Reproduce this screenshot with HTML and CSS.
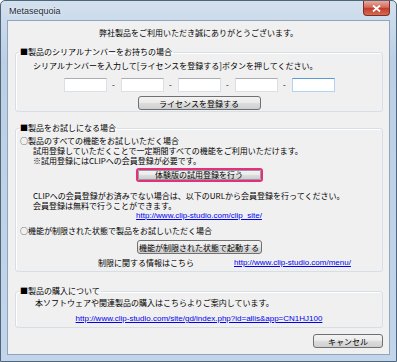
FILE: index.html
```html
<!DOCTYPE html>
<html lang="ja">
<head>
    <meta charset="UTF-8">
    <title>Metasequoia</title>
    <link rel="stylesheet" href="styles.css">
</head>
<body>
    <div class="window">
        <div class="titlebar">
            <span class="title">Metasequoia</span>
            <span class="close">
                <svg width="9" height="7" viewBox="0 0 9 7">
                    <path d="M1 0.5 L8 6.5 M8 0.5 L1 6.5" stroke="#fff" stroke-width="1.8"/>
                </svg>
            </span>
        </div>

        <div class="client">
            <p class="welcome">弊社製品をご利用いただき誠にありがとうございます。</p>

            <fieldset class="group group-serial">
                <legend>■製品のシリアルナンバーをお持ちの場合</legend>
                <p class="sub serial-note">シリアルナンバーを入力して[ライセンスを登録する]ボタンを押してください。</p>
                <div class="serial-row">
                    <input class="serial" type="text">
                    <span class="dash">-</span>
                    <input class="serial" type="text">
                    <span class="dash">-</span>
                    <input class="serial" type="text">
                    <span class="dash">-</span>
                    <input class="serial" type="text">
                    <span class="dash">-</span>
                    <input class="serial serial-focus" type="text">
                </div>
                <div class="row-center license-row">
                    <button class="btn btn-license">ライセンスを登録する</button>
                </div>
            </fieldset>

            <fieldset class="group group-trial">
                <legend>■製品をお試しになる場合</legend>
                <p class="option option-full">○製品のすべての機能をお試しいただく場合</p>
                <p class="sub lines">試用登録していただくことで一定期間すべての機能をご利用いただけます。<br>※試用登録にはCLIPへの会員登録が必要です。</p>
                <div class="row-center trial-row">
                    <span class="highlight">
                        <button class="btn btn-trial">体験版の試用登録を行う</button>
                    </span>
                </div>
                <p class="sub lines clip-note">CLIPへの会員登録がお済みでない場合は、以下のURLから会員登録を行ってください。<br>会員登録は無料で行うことができます。</p>
                <p class="row-center link-row"><a href="#">http://www.clip-studio.com/clip_site/</a></p>
                <p class="option option-limited">○機能が制限された状態で製品をお試しいただく場合</p>
                <div class="row-center limited-row">
                    <button class="btn btn-limited">機能が制限された状態で起動する</button>
                </div>
                <p class="info-row"><span class="info-label">制限に関する情報はこちら</span><a href="#">http://www.clip-studio.com/menu/</a></p>
            </fieldset>

            <fieldset class="group group-buy">
                <legend>■製品の購入について</legend>
                <p class="sub buy-note">本ソフトウェアや関連製品の購入はこちらよりご案内しています。</p>
                <p class="row-center buy-link"><a href="#">http://www.clip-studio.com/site/gd/index.php?id=allis&amp;app=CN1HJ100</a></p>
            </fieldset>

            <div class="footer">
                <button class="btn btn-cancel">キャンセル</button>
            </div>
        </div>
    </div>
</body>
</html>
```

FILE: styles.css
```css
body {
    margin: 0;
    font-family: "Noto Sans CJK JP", sans-serif;
    font-size: 8px;
    color: #000;
    background: #fff;
}

p {
    margin: 0;
}

.window {
    width: 397px;
    height: 362px;
    box-sizing: border-box;
    border: 1px solid #50647b;
    border-radius: 5px 5px 0 0;
    background: linear-gradient(#d3e0ee, #bccfe5 60px, #c3d5ea);
    padding: 0 6px 6px;
    display: flex;
    flex-direction: column;
}

.titlebar {
    height: 19px;
    display: flex;
    justify-content: space-between;
}

.title {
    font-family: "Liberation Sans", sans-serif;
    font-size: 9px;
    color: #1e2a38;
    margin: 5px 0 0 2px;
    text-shadow: 0 0 3px #fff;
}

.close {
    width: 27px;
    height: 15px;
    box-sizing: border-box;
    border: 1px solid #7a2f27;
    border-top: none;
    border-radius: 0 0 4px 4px;
    background: linear-gradient(#e9a89b, #d46a5c 45%, #c23c2c 52%, #d86a52);
    display: flex;
    align-items: center;
    justify-content: center;
}

.client {
    flex: 1;
    background: #f0f0f0;
    border: 1px solid #8fa5bd;
    display: flex;
    flex-direction: column;
}

.welcome {
    margin-top: 7px;
    text-align: center;
    line-height: 10px;
}

.group {
    margin: 9px 6px 0 7px;
    padding: 0;
    border: 1px solid #d5dfe5;
    border-radius: 3px;
    box-shadow: inset 1px 1px 0 #fff;
    min-width: 0;
}

.group legend {
    margin-left: 3px;
    padding: 0 1px;
    line-height: 10px;
}

.sub {
    padding-left: 17px;
}

.option {
    padding-left: 4px;
    line-height: 10px;
}

.lines {
    line-height: 10px;
}

.row-center {
    display: flex;
    justify-content: center;
}

/* serial section */
.serial-note {
    margin-top: 4px;
    line-height: 10px;
}

.serial-row {
    display: flex;
    justify-content: center;
    align-items: center;
    margin-top: 7px;
}

.serial {
    width: 43px;
    height: 14px;
    box-sizing: border-box;
    margin: 0;
    padding: 0;
    border: 1px solid #dbdfe6;
    border-top-color: #abadb3;
    background: #fff;
}

.serial-focus {
    border-color: #b5d3ef;
    border-top-color: #5b9bd5;
}

.dash {
    width: 14px;
    text-align: center;
    line-height: 14px;
}

.license-row {
    margin: 4px 0 1px;
}

/* buttons */
.btn {
    font: inherit;
    color: #000;
    height: 14px;
    box-sizing: border-box;
    padding: 0;
    border: 1px solid #707070;
    border-radius: 3px;
    background: linear-gradient(#f3f3f3, #ebebeb 45%, #dddddd 52%, #cfcfcf);
    line-height: 11px;
}

.btn-license {
    width: 123px;
}

/* trial section */
.group-trial {
    margin-top: 11px;
}

.option-full {
    margin-top: 3px;
}

.trial-row {
    margin-top: 2px;
}

.highlight {
    display: flex;
    border: 2px solid #e2307f;
    border-radius: 3px;
}

.btn-trial {
    width: 123px;
    height: 10px;
    line-height: 8px;
    border-color: #9a9a9a;
    border-radius: 1px;
}

.clip-note {
    margin-top: 9px;
}

.link-row {
    line-height: 10px;
}

a {
    color: #0000ee;
    font-family: "Liberation Sans", sans-serif;
}

.option-limited {
    margin-top: 5px;
}

.limited-row {
    margin-top: 4px;
}

.btn-limited {
    width: 125px;
}

.info-row {
    margin: 4px 0 3px;
    padding-left: 82px;
    line-height: 10px;
    display: flex;
    gap: 40px;
}

/* purchase section */
.group-buy {
    margin-top: 14px;
}

.buy-note {
    margin-top: 2px;
    padding-left: 19px;
    line-height: 10px;
}

.buy-link {
    margin: 6px 0 3px;
    line-height: 10px;
}

.footer {
    display: flex;
    justify-content: flex-end;
    margin: 6px 6px 0 0;
}

.btn-cancel {
    width: 70px;
}
```
